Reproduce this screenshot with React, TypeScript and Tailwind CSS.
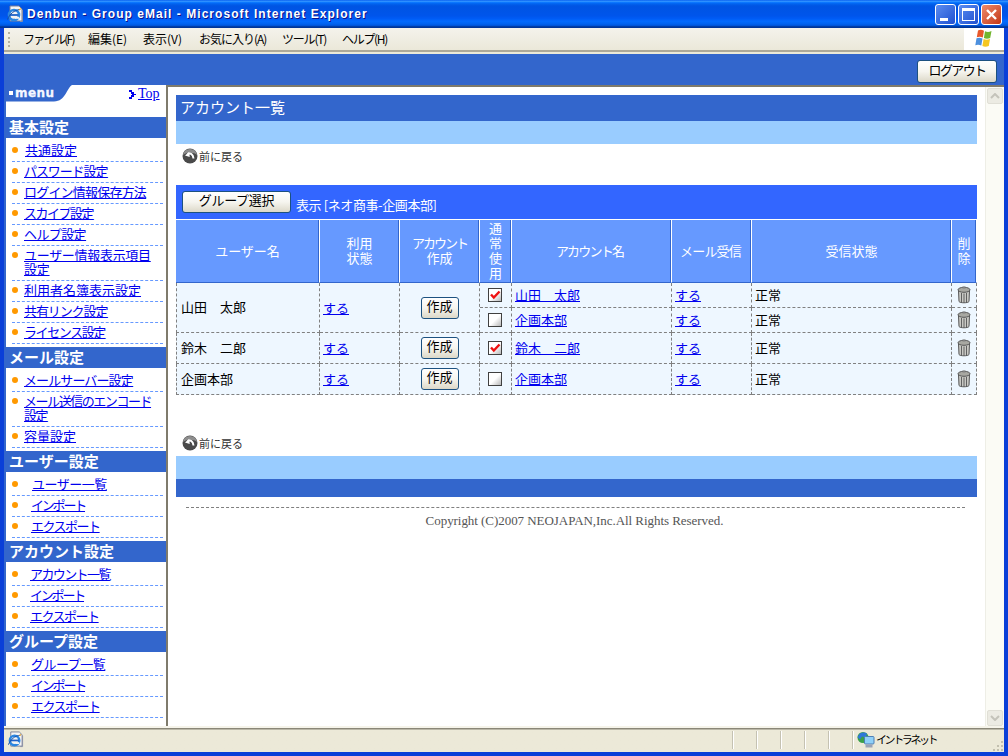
import React from "react";

const menus = [
  { label: "ファイル(F)", w: "w-[65px] tracking-[-1.7px]" },
  { label: "編集(E)", w: "w-[55px]" },
  { label: "表示(V)", w: "w-[56px]" },
  { label: "お気に入り(A)", w: "w-[83px] tracking-[-1px]" },
  { label: "ツール(T)", w: "w-[60px] tracking-[-1.2px]" },
  { label: "ヘルプ(H)", w: "w-[60px] tracking-[-1.3px]" },
];

const sections = [
  {
    title: "基本設定",
    items: [
      { label: "共通設定", pad: "pl-[13px]", fit: "" },
      { label: "パスワード設定", pad: "pl-[12px]", fit: "tracking-[-1.1px]" },
      { label: "ログイン情報保存方法", pad: "pl-[12px]", fit: "tracking-[-0.8px]" },
      { label: "スカイプ設定", pad: "pl-[12px]", fit: "tracking-[-1.5px]" },
      { label: "ヘルプ設定", pad: "pl-[12px]", fit: "tracking-[-0.6px]" },
      { label: "ユーザー情報表示項目\n設定", pad: "pl-[12px]", fit: "tracking-[-0.3px]", two: true },
      { label: "利用者名簿表示設定", pad: "pl-[12px]", fit: "" },
      { label: "共有リンク設定", pad: "pl-[12px]", fit: "tracking-[-1.1px]" },
      { label: "ライセンス設定", pad: "pl-[12px]", fit: "tracking-[-1.4px]" },
    ],
  },
  {
    title: "メール設定",
    items: [
      { label: "メールサーバー設定", pad: "pl-[12px]", fit: "tracking-[-0.9px]" },
      { label: "メール送信のエンコード\n設定", pad: "pl-[12px]", fit: "tracking-[-1.45px]", two: true },
      { label: "容量設定", pad: "pl-[12px]", fit: "" },
    ],
  },
  {
    title: "ユーザー設定",
    items: [
      { label: "ユーザー一覧", pad: "pl-[20px]", fit: "tracking-[-0.5px]" },
      { label: "インポート", pad: "pl-[19px]", fit: "tracking-[-2.2px]" },
      { label: "エクスポート", pad: "pl-[19px]", fit: "tracking-[-1.5px]" },
    ],
  },
  {
    title: "アカウント設定",
    items: [
      { label: "アカウント一覧", pad: "pl-[18px]", fit: "tracking-[-1.6px]" },
      { label: "インポート", pad: "pl-[18px]", fit: "tracking-[-2.2px]" },
      { label: "エクスポート", pad: "pl-[18px]", fit: "tracking-[-1.5px]" },
    ],
  },
  {
    title: "グループ設定",
    items: [
      { label: "グループ一覧", pad: "pl-[19px]", fit: "tracking-[-0.5px]" },
      { label: "インポート", pad: "pl-[19px]", fit: "tracking-[-2.2px]" },
      { label: "エクスポート", pad: "pl-[19px]", fit: "tracking-[-1.5px]" },
    ],
  },
];

const headers = [
  { w: "w-[144px]", fit: "", lines: ["ユーザー名"] },
  { w: "w-[80px]", fit: "", lines: ["利用", "状態"] },
  { w: "w-[80px]", fit: "", lines: ["アカウント", "作成"] },
  { w: "w-[32px]", fit: "", lines: ["通", "常", "使", "用"] },
  { w: "w-[160px]", fit: "pr-[4px] tracking-[-1.8px]", lines: ["アカウント名"] },
  { w: "w-[80px]", fit: "pr-[2px] tracking-[-0.8px]", lines: ["メール受信"] },
  { w: "w-[200px]", fit: "", lines: ["受信状態"] },
  { w: "w-[25px]", fit: "", lines: ["削", "除"] },
];

const cellBase = "border-r border-b border-dashed border-[#808080] bg-[#eef7ff] p-0 align-middle leading-none";

function IeIcon({ size = 18 }: { size?: number }) {
  return (
    <svg width={size} height={size} viewBox="0 0 18 18">
      <path d="M4 1h9l3 3v12H4z" fill="#f4f4f4" stroke="#7a7f96" strokeWidth="1" />
      <path d="M14 16.500h2.500V5" fill="none" stroke="#8a8fa6" strokeWidth="1" />
      <circle cx="8" cy="10" r="5" fill="none" stroke="#2b86e0" strokeWidth="2.600" />
      <path d="M3.500 10h9" stroke="#1f62c8" strokeWidth="1.800" />
      <path d="M13 12.800H9" stroke="#f4f4f4" strokeWidth="2" />
      <path d="M1.500 14.500c2-5.500 7-9.500 12.500-10" fill="none" stroke="#174fa8" strokeWidth="1" />
      <path d="M13 4.500c1 .3 1.500-.3 1.500-1" fill="none" stroke="#e8a020" strokeWidth="1.200" />
    </svg>
  );
}

function WinFlag() {
  return (
    <svg width="21" height="20" viewBox="0 0 21 20">
      <path d="M4 1.500c2-1 4-.8 6 .2L8.800 8.500c-2-1-4-1.200-6-.2z" fill="#e8582a" />
      <path d="M11 2.200c2 1 4 1 6.500-.1l-1.300 7c-2.200 1-4.300 1-6.300 0z" fill="#72b52e" />
      <path d="M2.500 9.300c2-1 4-.8 6 .2l-1.200 7c-2-1-4-1.200-6-.2z" fill="#4d90de" />
      <path d="M9.600 10c2 1 4 1 6.400 0l-1.200 7c-2.300 1.100-4.400 1.100-6.400 0z" fill="#f5c722" />
    </svg>
  );
}

function BackIcon() {
  return (
    <svg width="16" height="16" viewBox="0 0 16 16">
      <circle cx="8" cy="8" r="7.500" fill="#4a4a4a" />
      <path d="M1 7a7 6 0 0 1 14 0c-3-3-10-3-14 0z" fill="#8d8d8d" />
      <path d="M5.500 6.500c3-2 5.500-.5 6 4" fill="none" stroke="#ffffff" strokeWidth="2" />
      <path d="M3 7.500l4.200-3.700.5 5.200z" fill="#ffffff" />
    </svg>
  );
}

function Trash() {
  return (
    <svg width="14" height="18" viewBox="0 0 14 18" className="mx-auto block">
      <path d="M1.500 4.500L2 15.500c1 1.700 9 1.700 10 0l.5-11z" fill="#c9c9c4" stroke="#555555" strokeWidth="1" />
      <ellipse cx="7" cy="3.800" rx="6" ry="2.500" fill="#a8a8a2" stroke="#555555" strokeWidth="1" />
      <rect x="5.500" y="0.500" width="3" height="2" fill="#808080" />
      <path d="M4.500 7v9M7 7.500v9M9.500 7v9" stroke="#606060" strokeWidth="1" />
    </svg>
  );
}

function Check({ on }: { on?: boolean }) {
  return (
    <div className="relative mx-auto h-[14px] w-[14px] border border-[#404040] bg-gradient-to-br from-white from-50% to-[#b8b8b8]">
      {on && (
        <svg width="12" height="12" viewBox="0 0 12 12" className="absolute left-0 top-0">
          <path d="M2 5.500l2.800 3L10.500 2.500" fill="none" stroke="#ee1111" strokeWidth="2.400" />
        </svg>
      )}
    </div>
  );
}

function XpButton({ className, children }: { className: string; children: React.ReactNode }) {
  return (
    <button className={`flex items-center justify-center rounded-[3px] border border-[#1c5180] bg-gradient-to-b from-white via-[#f6f5ef] to-[#dcd8c8] leading-none text-black ${className}`}>
      {children}
    </button>
  );
}

function BackLink() {
  return (
    <div className="flex h-4 items-center gap-[1px] pl-[6px] text-[11px] leading-none text-[#333333]">
      <BackIcon />
      <span>前に戻る</span>
    </div>
  );
}

function Link({ children }: { children: React.ReactNode }) {
  return <a className="text-[13px] leading-none text-[#0000ee] underline">{children}</a>;
}

function Row({ name, span, h, check, account, h2, check2, account2 }: {
  name: string; span?: number; h: string; check?: boolean; account: string; h2?: string; check2?: boolean; account2?: string;
}) {
  const right = (c: boolean | undefined, a: string) => (
    <>
      <td className={`${cellBase} pr-[2px]`}><Check on={c} /></td>
      <td className={`${cellBase} pb-[4px] pl-[3px]`}><Link>{a}</Link></td>
      <td className={`${cellBase} pb-[4px] pl-[3px]`}><Link>する</Link></td>
      <td className={`${cellBase} pb-[2px] pl-[3px] text-[13px]`}>正常</td>
      <td className={cellBase}><Trash /></td>
    </>
  );
  return (
    <>
      <tr className={h}>
        <td rowSpan={span} className={`${cellBase} border-l pb-[2px] pl-[4px] text-[13px]`}>{name}</td>
        <td rowSpan={span} className={`${cellBase} pb-[4px] pl-[3px]`}><Link>する</Link></td>
        <td rowSpan={span} className={cellBase}>
          <XpButton className="mx-auto h-[22px] w-[38px] pb-[5px] text-[13px]">作成</XpButton>
        </td>
        {right(check, account)}
      </tr>
      {account2 && <tr className={h2}>{right(check2, account2)}</tr>}
    </>
  );
}

export default function App() {
  return (
    <div className="flex h-[756px] w-[1008px] flex-col overflow-hidden bg-[#0a3fd8] text-black [font-family:Noto_Sans_CJK_JP,sans-serif]">
      {/* Title bar */}
      <div className="relative flex h-[28px] shrink-0 items-center bg-[linear-gradient(180deg,#0058ee_0%,#3593ff_4%,#288eff_6%,#127dff_8%,#036ffc_10%,#0262ee_14%,#0057e5_20%,#0054e3_24%,#0055eb_56%,#005bf5_66%,#026afe_76%,#0062ef_86%,#0052d6_92%,#0040ab_94%,#003092_100%)] pl-[6px]">
        <IeIcon />
        <span className="ml-[3px] whitespace-nowrap text-[12px] font-bold leading-none tracking-[1.04px] text-white [font-family:Liberation_Sans,sans-serif] [text-shadow:1px_1px_#0f1089]">
          Denbun - Group eMail - Microsoft Internet Explorer
        </span>
        <div className="absolute left-[935px] top-[4px] h-[21px] w-[21px] rounded-[3px] border border-white bg-gradient-to-br from-[#5c8cf0] to-[#1f4fd0]">
          <div className="absolute bottom-[3px] left-[4px] h-[3px] w-[8px] bg-white" />
        </div>
        <div className="absolute left-[958px] top-[4px] h-[21px] w-[21px] rounded-[3px] border border-white bg-gradient-to-br from-[#5c8cf0] to-[#1f4fd0]">
          <div className="absolute left-[3px] top-[3px] h-[13px] w-[13px] border border-t-[3px] border-white" />
        </div>
        <div className="absolute left-[981px] top-[4px] h-[21px] w-[21px] rounded-[3px] border border-white bg-gradient-to-br from-[#ee8a6a] to-[#c23410]">
          <svg width="19" height="19" viewBox="0 0 19 19" className="absolute left-0 top-0">
            <path d="M5 5l9 9M14 5l-9 9" stroke="#ffffff" strokeWidth="2.400" />
          </svg>
        </div>
      </div>

      {/* Window body between the side frames */}
      <div className="mx-[4px] flex min-h-0 flex-1 flex-col bg-[#ece9d8]">
        {/* Menu bar */}
        <div className="flex h-[22px] shrink-0 items-center bg-gradient-to-b from-[#f4f3ec] to-[#ebe8d9]">
          <div className="ml-[4px] h-[15px] w-[2px] border-l-2 border-dotted border-[#b5b19f]" />
          <div className="ml-[13px] flex text-[12px] leading-none text-black">
            {menus.map((m) => (
              <span key={m.label} className={`${m.w} whitespace-nowrap`}>{m.label}</span>
            ))}
          </div>
          <div className="ml-auto flex h-full w-[40px] items-center justify-center bg-white"><WinFlag /></div>
        </div>
        <div className="h-[2px] shrink-0 bg-[#aca899]" />
        <div className="h-[2px] shrink-0 bg-[#ece9d8]" />

        {/* Page area */}
        <div className="flex min-h-0 flex-1 flex-col bg-[#3366cc] pl-[2px]">
          <div className="flex h-[31px] shrink-0 items-start justify-end pr-[7px] pt-[6px]">
            <XpButton className="h-[23px] w-[80px] pb-[4px] text-[13px] tracking-[-1.6px]">ログアウト</XpButton>
          </div>
          <div className="flex min-h-0 flex-1">
            {/* Sidebar */}
            <div className="relative h-[641px] w-[160px] shrink-0 bg-white">
              <svg width="160" height="17" viewBox="0 0 160 17" className="absolute left-0 top-0">
                <path d="M0 0H66C60 4 60 16 48 16.500H0z" fill="#3366cc" />
              </svg>
              <div className="absolute left-[3px] top-[2px] flex items-center gap-[2px] text-[12px] font-bold leading-none tracking-[0.4px] text-[#f4f6ff] [font-family:DejaVu_Sans,sans-serif]">
                <span className="h-[4px] w-[4px] bg-white" />
                <span className="[-webkit-text-stroke:0.3px_#f4f6ff]">menu</span>
              </div>
              <div className="absolute left-[123px] top-[2px] flex items-center gap-[2px]">
                <svg width="7" height="9" viewBox="0 0 7 9">
                  <path d="M0 0h3v2h2v2h2v1H5v2H3v2H0V7h2V5h1V4H2V2H0z" fill="#0000ee" />
                </svg>
                <a className="text-[14px] leading-none text-[#0000ee] underline [font-family:Liberation_Serif,serif]">Top</a>
              </div>
              <div className="pt-[32px]">
                {sections.map((s) => (
                  <div key={s.title} className="mb-[3px]">
                    <div className="flex h-[21px] items-center bg-[#3366cc] pb-[2px] pl-[3px] text-[15px] font-bold leading-none text-white">{s.title}</div>
                    <div className="pt-[3px]">
                      {s.items.map((it) => (
                        <div key={it.label} className={`relative ml-[6px] mr-[3px] border-b border-dashed border-[#6699ff] ${it.two ? "h-[35px]" : "h-[21px]"}`}>
                          <span className="absolute left-0 top-[6px] h-[6px] w-[6px] rounded-full bg-[#ff9900]" />
                          <div className={`${it.pad} flex h-full items-center pb-[2px]`}>
                            <a className={`${it.fit} whitespace-pre text-[13px] leading-[14px] text-[#0000ee] underline`}>{it.label}</a>
                          </div>
                        </div>
                      ))}
                    </div>
                  </div>
                ))}
              </div>
            </div>

            {/* Content */}
            <div className="flex min-w-0 flex-1 border-l-2 border-t-2 border-[#7f7b6c] bg-white">
              <div className="w-[817px] shrink-0 pl-[8px] pr-[8px] pt-[8px]">
                <div className="flex h-[26px] items-center bg-[#3366cc] pb-[4px] pl-[4px] text-[15px] leading-none text-white">アカウント一覧</div>
                <div className="h-[23px] bg-[#99ccff]" />
                <div className="mt-[4px]"><BackLink /></div>

                <div className="mt-[21px] flex h-[34px] items-start bg-[#3366ff] pl-[6px] pt-[6px]">
                  <XpButton className="h-[22px] w-[109px] pb-[5px] text-[13px] tracking-[-0.3px]">グループ選択</XpButton>
                  <span className="ml-[5px] mt-[7px] whitespace-nowrap text-[13px] leading-none tracking-[-0.4px] text-white">表示 [ネオ商事-企画本部]</span>
                </div>

                <table className="w-[801px] table-fixed border-separate border-spacing-0">
                  <thead>
                    <tr className="h-[64px]">
                      {headers.map((h) => (
                        <th key={h.lines.join("")} className={`${h.w} ${h.fit} border-r border-b border-t border-b-[#3366cc] border-r-white border-t-white bg-[#6699ff] p-0 pb-[2px] text-center text-[13px] font-normal leading-[15px] text-white shadow-[inset_-1px_0_#3366cc]`}>
                          {h.lines.map((l) => <div key={l} className={l === "アカウント" ? "tracking-[-2px]" : ""}>{l}</div>)}
                        </th>
                      ))}
                    </tr>
                  </thead>
                  <tbody>
                    <Row name="山田　太郎" span={2} h="h-[25px]" check account="山田　太郎" h2="h-[25px]" account2="企画本部" />
                    <Row name="鈴木　二郎" h="h-[31px]" check account="鈴木　二郎" />
                    <Row name="企画本部" h="h-[31px]" account="企画本部" />
                  </tbody>
                </table>

                <div className="mt-[40px]"><BackLink /></div>
                <div className="mt-[5px] h-[23px] bg-[#99ccff]" />
                <div className="h-[18px] bg-[#3366cc]" />
                <div className="ml-[10px] mr-[12px] mt-[10px] border-t border-dashed border-[#808080]" />
                <div className="mt-[6px] pr-[4px] text-center text-[13px] leading-none tracking-[-0.05px] text-[#555555] [font-family:Liberation_Serif,serif]">
                  Copyright (C)2007 NEOJAPAN,Inc.All Rights Reserved.
                </div>
              </div>

              {/* Scrollbar */}
              <div className="flex flex-1 flex-col items-center justify-between border-l border-[#eeeee6] bg-[#fbfbf5] pt-[1px]">
                <div className="flex h-[16px] w-[16px] items-center justify-center rounded-[2px] border border-[#e0dfd6] bg-[#ecebe3]">
                  <svg width="10" height="6" viewBox="0 0 10 6"><path d="M1 5l4-4 4 4" fill="none" stroke="#c4c3ba" strokeWidth="2" /></svg>
                </div>
                <div className="flex h-[16px] w-[16px] items-center justify-center rounded-[2px] border border-[#e0dfd6] bg-[#ecebe3]">
                  <svg width="10" height="6" viewBox="0 0 10 6"><path d="M1 1l4 4 4-4" fill="none" stroke="#c4c3ba" strokeWidth="2" /></svg>
                </div>
              </div>
            </div>
          </div>
        </div>

        {/* Status bar */}
        <div className="relative h-[26px] shrink-0 border-t-2 border-[#f6f4ea] bg-gradient-to-b from-[#8a8778] from-[1px] to-[#ece9d8] to-[2px]">
          <div className="absolute left-[3px] top-[3px]"><IeIcon size={17} /></div>
          {[728, 752, 776, 800, 824, 848].map((x) => (
            <div key={x} className="absolute top-[3px] h-[18px] border-l border-r border-l-[#c5c2b2] border-r-white" style={{ left: x }} />
          ))}
          <svg width="18" height="18" viewBox="0 0 18 18" className="absolute left-[853px] top-[3px]">
            <circle cx="6" cy="6.500" r="5.500" fill="#3aa04a" />
            <path d="M3 2.500c2.500-1.500 5-1.500 7 0l-1.500 4-3.500-1-2 3-2.500-2.500z" fill="#2f78d8" />
            <rect x="7.500" y="5.500" width="9.500" height="7.500" rx="1" fill="#8fd0f8" stroke="#4d7fb5" strokeWidth="1" />
            <rect x="8.500" y="13.500" width="7" height="3" fill="#9aa3b5" />
          </svg>
          <span className="absolute left-[872px] top-[6px] text-[11px] leading-none tracking-[-2.4px] text-black">イントラネット</span>
          <svg width="12" height="12" viewBox="0 0 12 12" className="absolute right-0 bottom-[1px]">
            <path d="M9 2h2v2H9zM5 6h2v2H5zM9 6h2v2H9zM1 10h2v2H1zM5 10h2v2H5zM9 10h2v2H9z" fill="#c2bfae" />
          </svg>
        </div>
      </div>
      <div className="h-[4px] shrink-0" />
    </div>
  );
}
